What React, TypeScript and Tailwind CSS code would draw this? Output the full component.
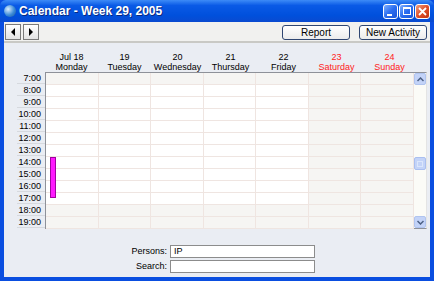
import React from "react";

const days = [
  { top: "Jul 18", name: "Monday", weekend: false },
  { top: "19", name: "Tuesday", weekend: false },
  { top: "20", name: "Wednesday", weekend: false },
  { top: "21", name: "Thursday", weekend: false },
  { top: "22", name: "Friday", weekend: false },
  { top: "23", name: "Saturday", weekend: true },
  { top: "24", name: "Sunday", weekend: true },
];

const hours = [7, 8, 9, 10, 11, 12, 13, 14, 15, 16, 17, 18, 19];

const TitleButton = ({ kind }: { kind: "min" | "max" | "close" }) => (
  <div
    className={
      kind === "close"
        ? "w-[15px] h-[15px] rounded-[3px] border border-white bg-[linear-gradient(135deg,#f0a080,#e0502a_50%,#c0330f)] flex items-center justify-center"
        : "w-[15px] h-[15px] rounded-[3px] border border-white bg-[linear-gradient(135deg,#7fb0ff,#2a6df0_50%,#1a55d8)] flex items-center justify-center"
    }
  >
    {kind === "min" && <div className="w-[5px] h-[2px] bg-white mt-[7px] -ml-[3px]" />}
    {kind === "max" && <div className="w-[8px] h-[8px] border border-white border-t-2" />}
    {kind === "close" && (
      <svg width="9" height="9" viewBox="0 0 9 9">
        <path d="M1 1 L8 8 M8 1 L1 8" stroke="white" strokeWidth="1.8" />
      </svg>
    )}
  </div>
);

const NavButton = ({ dir }: { dir: "left" | "right" }) => (
  <div className="w-[16px] h-[16px] border border-[#7a7a7a] bg-[linear-gradient(#ffffff,#e3e3e3)] flex items-center justify-center">
    <svg width="6" height="8" viewBox="0 0 6 8">
      {dir === "left" ? <path d="M5 0 L1 4 L5 8 Z" fill="black" /> : <path d="M1 0 L5 4 L1 8 Z" fill="black" />}
    </svg>
  </div>
);

const PushButton = ({ label }: { label: string }) => (
  <div className="w-[68px] h-[15px] rounded-[3px] border border-[#2f4672] bg-[linear-gradient(#ffffff,#ececec)] flex items-center justify-center text-[10px] leading-none text-black">
    {label}
  </div>
);

const Arrow = ({ up }: { up: boolean }) => (
  <div className="w-[12px] h-[12px] rounded-[2px] bg-[#c3d3f8] border border-[#b0c4ef] flex items-center justify-center">
    <svg width="7" height="5" viewBox="0 0 7 5">
      <path d={up ? "M0.5 4 L3.5 1 L6.5 4" : "M0.5 1 L3.5 4 L6.5 1"} stroke="#4d6185" strokeWidth="1.5" fill="none" />
    </svg>
  </div>
);

export default function App() {
  return (
    <div className="w-[434px] h-[281px] flex flex-col bg-[#0a4ee0] font-['Liberation_Sans',Arial,sans-serif] overflow-hidden">
      {/* Title bar */}
      <div className="h-[22px] shrink-0 flex items-center px-[4px] rounded-t-[6px] bg-[linear-gradient(#3d8bf7,#0a5ae6_25%,#0050dc_70%,#0a4ad0)]">
        <div className="w-[12px] h-[12px] rounded-full bg-[radial-gradient(circle_at_35%_35%,#d8ecff,#3a8ad6_55%,#1a4f9a)]" />
        <span className="ml-[3px] text-white font-bold text-[12px] leading-none [text-shadow:1px_1px_0_#0a2a80]">
          Calendar - Week 29, 2005
        </span>
        <div className="ml-auto flex gap-[1px]">
          <TitleButton kind="min" />
          <TitleButton kind="max" />
          <TitleButton kind="close" />
        </div>
      </div>

      {/* Body */}
      <div className="flex-1 flex flex-col mx-[4px] mb-[4px] bg-[#eaedf3]">
        {/* Toolbar */}
        <div className="h-[21px] shrink-0 flex items-center px-[1px] bg-[#f1f1ef] border-b-2 border-[#c9c9c5]">
          <div className="flex gap-[2px] mt-[1px]">
            <NavButton dir="left" />
            <NavButton dir="right" />
          </div>
          <div className="ml-auto flex gap-[9px] mr-[2px] mt-[2px]">
            <PushButton label="Report" />
            <PushButton label="New Activity" />
          </div>
        </div>

        {/* Day header */}
        <div className="flex pl-[41px] pr-[14px] pt-[9px] h-[29px] shrink-0">
          {days.map((d) => (
            <div
              key={d.name}
              className={
                d.weekend
                  ? "flex-1 flex flex-col items-center text-[9px] leading-[10px] text-[#ff2020]"
                  : "flex-1 flex flex-col items-center text-[9px] leading-[10px] text-black"
              }
            >
              <span>{d.top}</span>
              <span>{d.name}</span>
            </div>
          ))}
        </div>

        {/* Grid */}
        <div className="flex h-[157px] shrink-0">
          <div className="w-[41px] shrink-0 flex flex-col pl-[13px]">
            {hours.map((h) => (
              <div
                key={h}
                className="h-[12px] shrink-0 border-b border-[#d6d9de] text-right pr-[4px] text-[9px] leading-[12px] text-black"
              >
                {h}:00
              </div>
            ))}
          </div>
          <div className="flex-1 flex border border-[#8e9199] border-r-[#e4e4e4] mr-[3px] bg-white">
            <div className="flex-1 grid grid-cols-7 relative">
              {days.map((d) => (
                <div key={d.name} className="flex flex-col border-r border-[#efe5e1]">
                  {hours.map((h) => {
                    const off = d.weekend || h < 8 || h > 17;
                    return (
                      <div
                        key={h}
                        className={
                          off
                            ? "h-[12px] shrink-0 border-b border-[#efe5e1] bg-[#f6f5f3]"
                            : "h-[12px] shrink-0 border-b border-[#efe5e1] bg-white"
                        }
                      />
                    );
                  })}
                </div>
              ))}
              <div className="absolute left-[4px] top-[84px] w-[6px] h-[41px] bg-[#ff19ff] border border-[#a000a0]" />
            </div>
            {/* Scrollbar */}
            <div className="w-[12px] shrink-0 flex flex-col bg-[#fbfbf7]">
              <Arrow up />
              <div className="flex-1 flex flex-col">
                <div className="h-[72px]" />
                <div className="w-[12px] h-[13px] rounded-[2px] bg-[#c3d3f8] border border-[#aabff0] flex items-center justify-center">
                  <div className="w-[6px] h-[6px] border border-[#dbe6fc]" />
                </div>
              </div>
              <Arrow up={false} />
            </div>
          </div>
        </div>

        {/* Form */}
        <div className="flex flex-col gap-[1px] mt-[16px] text-[9px] text-black">
          <div className="flex items-center">
            <span className="w-[166px] text-right pr-[3px]">Persons:</span>
            <div className="w-[145px] h-[13px] border border-[#8c8c8c] bg-white pl-[3px] leading-[11px]">IP</div>
          </div>
          <div className="flex items-center">
            <span className="w-[166px] text-right pr-[3px]">Search:</span>
            <div className="w-[145px] h-[13px] border border-[#8c8c8c] bg-white" />
          </div>
        </div>
      </div>
    </div>
  );
}
